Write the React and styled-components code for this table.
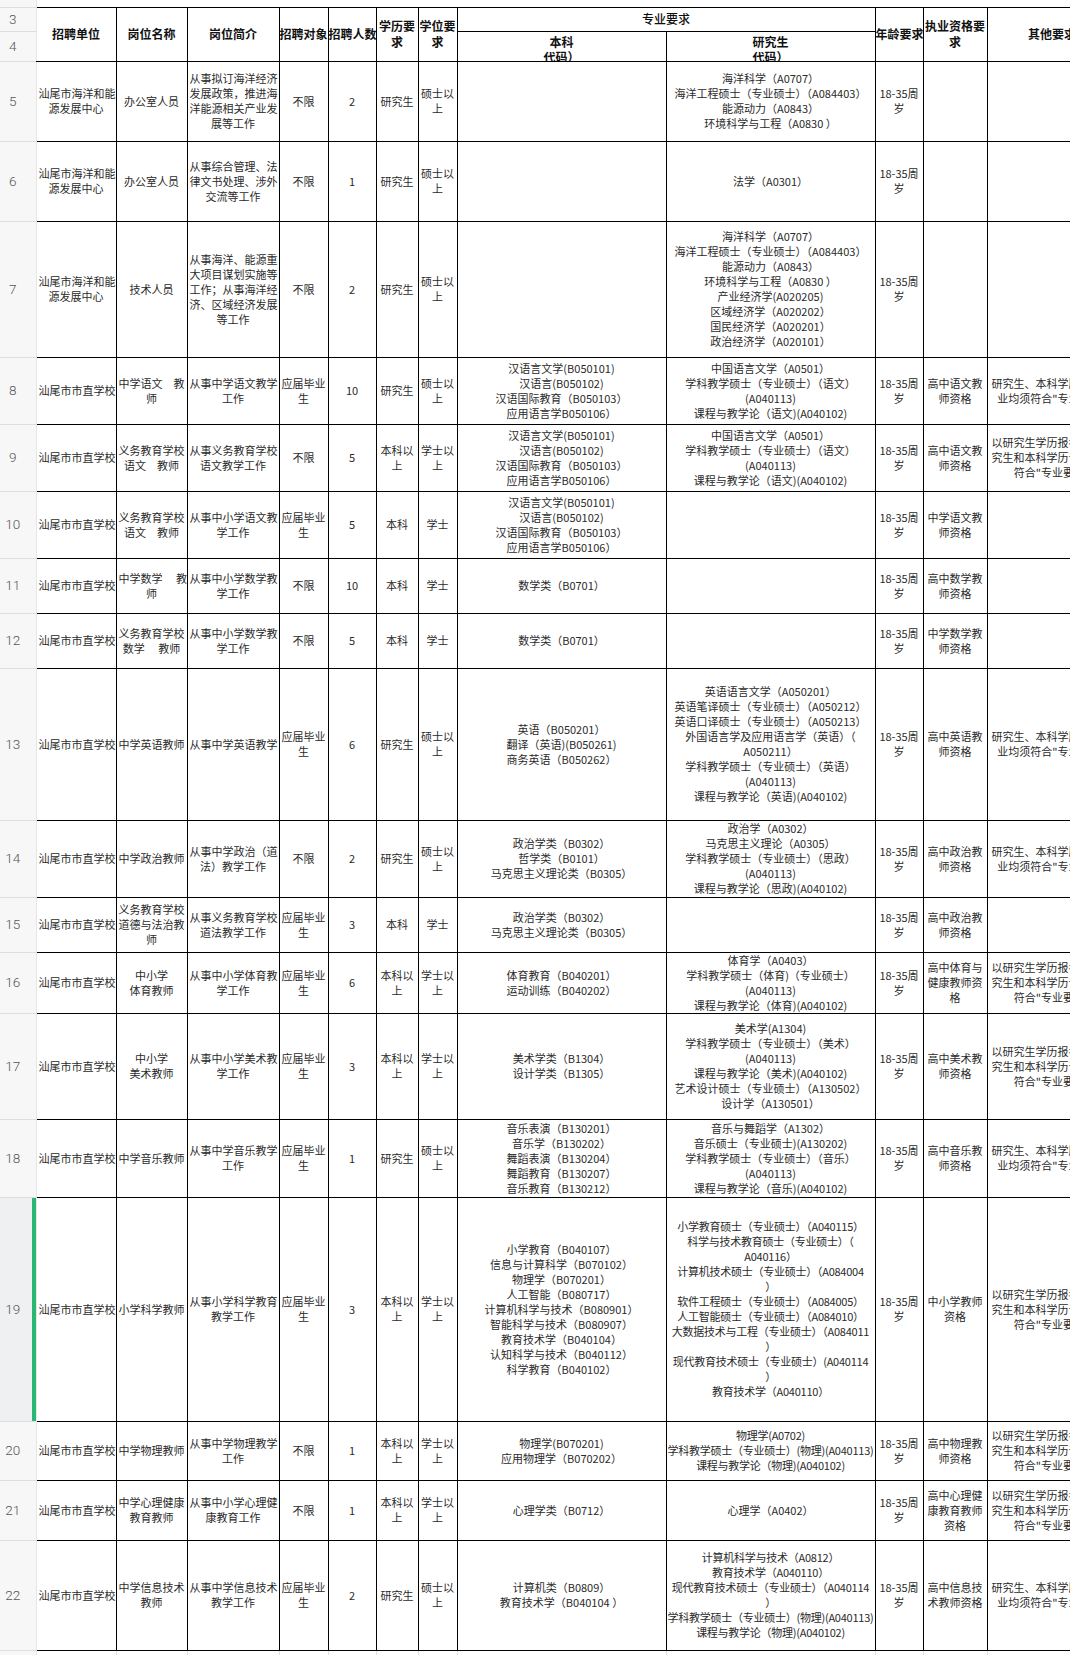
import styled, { createGlobalStyle } from 'styled-components'

export default function App() {
    return (
        <Viewport>
            <GlobalStyle />
            <Sheet>
                <colgroup>
                    {widths.map((w, i) => (
                        <Col key={i} $w={w} />
                    ))}
                </colgroup>
                <tbody>
                    <Row $h={7}>
                        <RowHead />
                        <TopGap colSpan={12} />
                    </Row>
                    <Row $h={24}>
                        <RowHead>3</RowHead>
                        <HeadCell rowSpan={2} $first>
                            招聘单位
                        </HeadCell>
                        <HeadCell rowSpan={2}>岗位名称</HeadCell>
                        <HeadCell rowSpan={2}>岗位简介</HeadCell>
                        <HeadCell rowSpan={2}>招聘对象</HeadCell>
                        <HeadCell rowSpan={2}>招聘人数</HeadCell>
                        <HeadCell rowSpan={2}>{'学历要\n求'}</HeadCell>
                        <HeadCell rowSpan={2}>{'学位要\n求'}</HeadCell>
                        <HeadCell colSpan={2} $light>
                            专业要求
                        </HeadCell>
                        <HeadCell rowSpan={2}>年龄要求</HeadCell>
                        <HeadCell rowSpan={2}>{'执业资格要\n求'}</HeadCell>
                        <HeadCell rowSpan={2}>其他要求</HeadCell>
                    </Row>
                    <Row $h={30}>
                        <RowHead>4</RowHead>
                        <SubHead>
                            <Clip>{'本科\n代码）'}</Clip>
                        </SubHead>
                        <SubHead>
                            <Clip>{'研究生\n代码）'}</Clip>
                        </SubHead>
                    </Row>
                    {rows.map((r) => (
                        <Row key={r.n} $h={r.h}>
                            <RowHead $active={r.n === 19}>{r.n}</RowHead>
                            {r.c.map((text, i) => (
                                <Cell
                                    key={i}
                                    $first={i === 0}
                                    $tight={r.tight && i === 8}
                                >
                                    {text}
                                </Cell>
                            ))}
                        </Row>
                    ))}
                    <Row $h={20}>
                        <RowHead $top>23</RowHead>
                        {widths.slice(1).map((w, i) => (
                            <Cell key={i} $first={i === 0} $ghost />
                        ))}
                    </Row>
                </tbody>
            </Sheet>
        </Viewport>
    )
}

const widths = [36, 80, 71, 92, 49, 48, 42, 39, 209, 209, 48, 64, 130]

const U1 = '汕尾市海洋和能\n源发展中心'
const U2 = '汕尾市市直学校'
const AGE = '18-35周\n岁'
const YJS = '研究生'
const SS = '硕士以\n上'
const YJ = '应届毕业\n生'
const BKUP = '本科以\n上'
const XSUP = '学士以\n上'
const OTHER_A = '研究生、本科学历所学专\n业均须符合"专业要求"'
const OTHER_B = '以研究生学历报考的，研\n究生和本科学历专业均须\n符合"专业要求"'
const OCEAN =
    '海洋科学（A0707）\n海洋工程硕士（专业硕士）（A084403）\n能源动力（A0843）\n环境科学与工程（A0830 ）'
const HAN =
    '汉语言文学(B050101)\n汉语言(B050102)\n汉语国际教育（B050103）\n应用语言学B050106）'
const CN_GRAD =
    '中国语言文学（A0501）\n学科教学硕士（专业硕士）（语文）\n(A040113)\n课程与教学论（语文)(A040102)'

const rows = [
    {
        n: 5,
        h: 80,
        c: [
            U1,
            '办公室人员',
            '从事拟订海洋经济\n发展政策，推进海\n洋能源相关产业发\n展等工作',
            '不限',
            '2',
            YJS,
            SS,
            '',
            OCEAN,
            AGE,
            '',
            '',
        ],
    },
    {
        n: 6,
        h: 80,
        c: [
            U1,
            '办公室人员',
            '从事综合管理、法\n律文书处理、涉外\n交流等工作',
            '不限',
            '1',
            YJS,
            SS,
            '',
            '法学（A0301）',
            AGE,
            '',
            '',
        ],
    },
    {
        n: 7,
        h: 136,
        c: [
            U1,
            '技术人员',
            '从事海洋、能源重\n大项目谋划实施等\n工作；从事海洋经\n济、区域经济发展\n等工作',
            '不限',
            '2',
            YJS,
            SS,
            '',
            OCEAN +
                '\n产业经济学(A020205)\n区域经济学（A020202）\n国民经济学（A020201）\n政治经济学（A020101）',
            AGE,
            '',
            '',
        ],
    },
    {
        n: 8,
        h: 67,
        c: [
            U2,
            '中学语文\u3000教\n师',
            '从事中学语文教学\n工作',
            YJ,
            '10',
            YJS,
            SS,
            HAN,
            CN_GRAD,
            AGE,
            '高中语文教\n师资格',
            OTHER_A,
        ],
    },
    {
        n: 9,
        h: 67,
        c: [
            U2,
            '义务教育学校\n语文\u3000教师',
            '从事义务教育学校\n语文教学工作',
            '不限',
            '5',
            BKUP,
            XSUP,
            HAN,
            CN_GRAD,
            AGE,
            '高中语文教\n师资格',
            OTHER_B,
        ],
    },
    {
        n: 10,
        h: 67,
        c: [
            U2,
            '义务教育学校\n语文\u3000教师',
            '从事中小学语文教\n学工作',
            YJ,
            '5',
            '本科',
            '学士',
            HAN,
            '',
            AGE,
            '中学语文教\n师资格',
            '',
        ],
    },
    {
        n: 11,
        h: 55,
        c: [
            U2,
            '中学数学\u3000 教\n师',
            '从事中小学数学教\n学工作',
            '不限',
            '10',
            '本科',
            '学士',
            '数学类（B0701）',
            '',
            AGE,
            '高中数学教\n师资格',
            '',
        ],
    },
    {
        n: 12,
        h: 55,
        c: [
            U2,
            '义务教育学校\n数学\u3000 教师',
            '从事中小学数学教\n学工作',
            '不限',
            '5',
            '本科',
            '学士',
            '数学类（B0701）',
            '',
            AGE,
            '中学数学教\n师资格',
            '',
        ],
    },
    {
        n: 13,
        h: 152,
        c: [
            U2,
            '中学英语教师',
            '从事中学英语教学',
            YJ,
            '6',
            YJS,
            SS,
            '英语（B050201）\n翻译（英语)(B050261)\n商务英语（B050262）',
            '英语语言文学（A050201）\n英语笔译硕士（专业硕士）（A050212）\n英语口译硕士（专业硕士）（A050213）\n外国语言学及应用语言学（英语）（\nA050211）\n学科教学硕士（专业硕士）（英语）\n(A040113)\n课程与教学论（英语)(A040102)',
            AGE,
            '高中英语教\n师资格',
            OTHER_A,
        ],
    },
    {
        n: 14,
        h: 77,
        c: [
            U2,
            '中学政治教师',
            '从事中学政治（道\n法）教学工作',
            '不限',
            '2',
            YJS,
            SS,
            '政治学类（B0302）\n哲学类（B0101）\n马克思主义理论类（B0305）',
            '政治学（A0302）\n马克思主义理论（A0305）\n学科教学硕士（专业硕士）（思政）\n(A040113)\n课程与教学论（思政)(A040102)',
            AGE,
            '高中政治教\n师资格',
            OTHER_A,
        ],
    },
    {
        n: 15,
        h: 55,
        c: [
            U2,
            '义务教育学校\n道德与法治教\n师',
            '从事义务教育学校\n道法教学工作',
            YJ,
            '3',
            '本科',
            '学士',
            '政治学类（B0302）\n马克思主义理论类（B0305）',
            '',
            AGE,
            '高中政治教\n师资格',
            '',
        ],
    },
    {
        n: 16,
        h: 61,
        c: [
            U2,
            '中小学\n体育教师',
            '从事中小学体育教\n学工作',
            YJ,
            '6',
            BKUP,
            XSUP,
            '体育教育（B040201）\n运动训练（B040202）',
            '体育学（A0403）\n学科教学硕士（体育)（专业硕士）\n(A040113)\n课程与教学论（体育)(A040102)',
            AGE,
            '高中体育与\n健康教师资\n格',
            OTHER_B,
        ],
    },
    {
        n: 17,
        h: 106,
        c: [
            U2,
            '中小学\n美术教师',
            '从事中小学美术教\n学工作',
            YJ,
            '3',
            BKUP,
            XSUP,
            '美术学类（B1304）\n设计学类（B1305）',
            '美术学(A1304)\n学科教学硕士（专业硕士）（美术）\n(A040113)\n课程与教学论（美术)(A040102)\n艺术设计硕士（专业硕士）（A130502）\n设计学（A130501）',
            AGE,
            '高中美术教\n师资格',
            OTHER_B,
        ],
    },
    {
        n: 18,
        h: 78,
        c: [
            U2,
            '中学音乐教师',
            '从事中学音乐教学\n工作',
            YJ,
            '1',
            YJS,
            SS,
            '音乐表演（B130201）\n音乐学（B130202）\n舞蹈表演（B130204）\n舞蹈教育（B130207）\n音乐教育（B130212）',
            '音乐与舞蹈学（A1302）\n音乐硕士（专业硕士)(A130202)\n学科教学硕士（专业硕士）（音乐）\n(A040113)\n课程与教学论（音乐)(A040102)',
            AGE,
            '高中音乐教\n师资格',
            OTHER_A,
        ],
    },
    {
        n: 19,
        h: 224,
        tight: true,
        c: [
            U2,
            '小学科学教师',
            '从事小学科学教育\n教学工作',
            YJ,
            '3',
            BKUP,
            XSUP,
            '小学教育（B040107）\n信息与计算科学（B070102）\n物理学（B070201）\n人工智能（B080717）\n计算机科学与技术（B080901）\n智能科学与技术（B080907）\n教育技术学（B040104）\n认知科学与技术（B040112）\n科学教育（B040102）',
            '小学教育硕士（专业硕士）（A040115）\n科学与技术教育硕士（专业硕士）（\nA040116）\n计算机技术硕士（专业硕士）（A084004\n）\n软件工程硕士（专业硕士）（A084005）\n人工智能硕士（专业硕士）（A084010）\n大数据技术与工程（专业硕士）（A084011\n）\n现代教育技术硕士（专业硕士）(A040114\n）\n教育技术学（A040110）',
            AGE,
            '中小学教师\n资格',
            OTHER_B,
        ],
    },
    {
        n: 20,
        h: 59,
        tight: true,
        c: [
            U2,
            '中学物理教师',
            '从事中学物理教学\n工作',
            '不限',
            '1',
            BKUP,
            XSUP,
            '物理学(B070201)\n应用物理学（B070202）',
            '物理学(A0702)\n学科教学硕士（专业硕士）(物理)(A040113)\n课程与教学论（物理)(A040102)',
            AGE,
            '高中物理教\n师资格',
            OTHER_B,
        ],
    },
    {
        n: 21,
        h: 60,
        c: [
            U2,
            '中学心理健康\n教育教师',
            '从事中小学心理健\n康教育工作',
            '不限',
            '1',
            BKUP,
            XSUP,
            '心理学类（B0712）',
            '心理学（A0402）',
            AGE,
            '高中心理健\n康教育教师\n资格',
            OTHER_B,
        ],
    },
    {
        n: 22,
        h: 110,
        tight: true,
        c: [
            U2,
            '中学信息技术\n教师',
            '从事中学信息技术\n教学工作',
            YJ,
            '2',
            YJS,
            SS,
            '计算机类（B0809）\n教育技术学（B040104 ）',
            '计算机科学与技术（A0812）\n教育技术学（A040110）\n现代教育技术硕士（专业硕士）（A040114\n）\n学科教学硕士（专业硕士）(物理)(A040113)\n课程与教学论（物理)(A040102)',
            AGE,
            '高中信息技\n术教师资格',
            OTHER_A,
        ],
    },
]

const GlobalStyle = createGlobalStyle`
    html,
    body {
        margin: 0;
        padding: 0;
        overflow: hidden;
        background: #ffffff;
    }
    body {
        font-family: 'Noto Sans CJK SC', 'Noto Sans', sans-serif;
    }
`
const Viewport = styled.div`
    width: 1070px;
    height: 1655px;
    overflow: hidden;
`
const Sheet = styled.table`
    border-collapse: collapse;
    table-layout: fixed;
    width: 1117px;
    color: #2a2a2a;
`
const Col = styled.col`
    width: ${(p) => p.$w}px;
`
const Row = styled.tr`
    height: ${(p) => p.$h}px;
`
const RowHead = styled.th`
    padding: ${(p) => (p.$top ? '1px 10px 0 0' : '0 10px 0 0')};
    background: ${(p) =>
        p.$active
            ? 'linear-gradient(to left, #2bb673 4px, #eef0f2 4px)'
            : '#f7f7f7'};
    border-bottom: 1px solid #dedede;
    border-right: 1px solid #e6e6e6;
    font-family: Roboto, 'Noto Sans', sans-serif;
    font-weight: 300;
    font-size: 13.5px;
    line-height: 15px;
    color: #555555;
    text-align: center;
    vertical-align: ${(p) => (p.$top ? 'top' : 'middle')};
`
const TopGap = styled.td`
    padding: 0;
    border-bottom: 1px solid #000000;
`
const HeadCell = styled.th`
    padding: 0;
    border: 1px solid #000000;
    border-left: ${(p) => (p.$first ? 'none' : '1px solid #000000')};
    font-size: 12px;
    line-height: 16px;
    font-weight: ${(p) => (p.$light ? 500 : 700)};
    color: #111111;
    text-align: center;
    vertical-align: middle;
    white-space: pre;
`
const SubHead = styled(HeadCell)`
    vertical-align: top;
`
const Clip = styled.div`
    box-sizing: border-box;
    height: 29px;
    padding-top: 2px;
    line-height: 15px;
    overflow: hidden;
`
const Cell = styled.td`
    padding: ${(p) => (p.$tight ? '0' : '0 2px')};
    border: 1px solid ${(p) => (p.$ghost ? '#e2e2e2' : '#000000')};
    border-top: ${(p) => (p.$ghost ? 'none' : '1px solid #000000')};
    border-left: ${(p) =>
        p.$first ? 'none' : `1px solid ${p.$ghost ? '#e2e2e2' : '#000000'}`};
    font-size: 11px;
    line-height: 15px;
    letter-spacing: ${(p) => (p.$tight ? '-0.25px' : 'normal')};
    text-align: center;
    vertical-align: middle;
    white-space: pre;
    overflow: hidden;
`
